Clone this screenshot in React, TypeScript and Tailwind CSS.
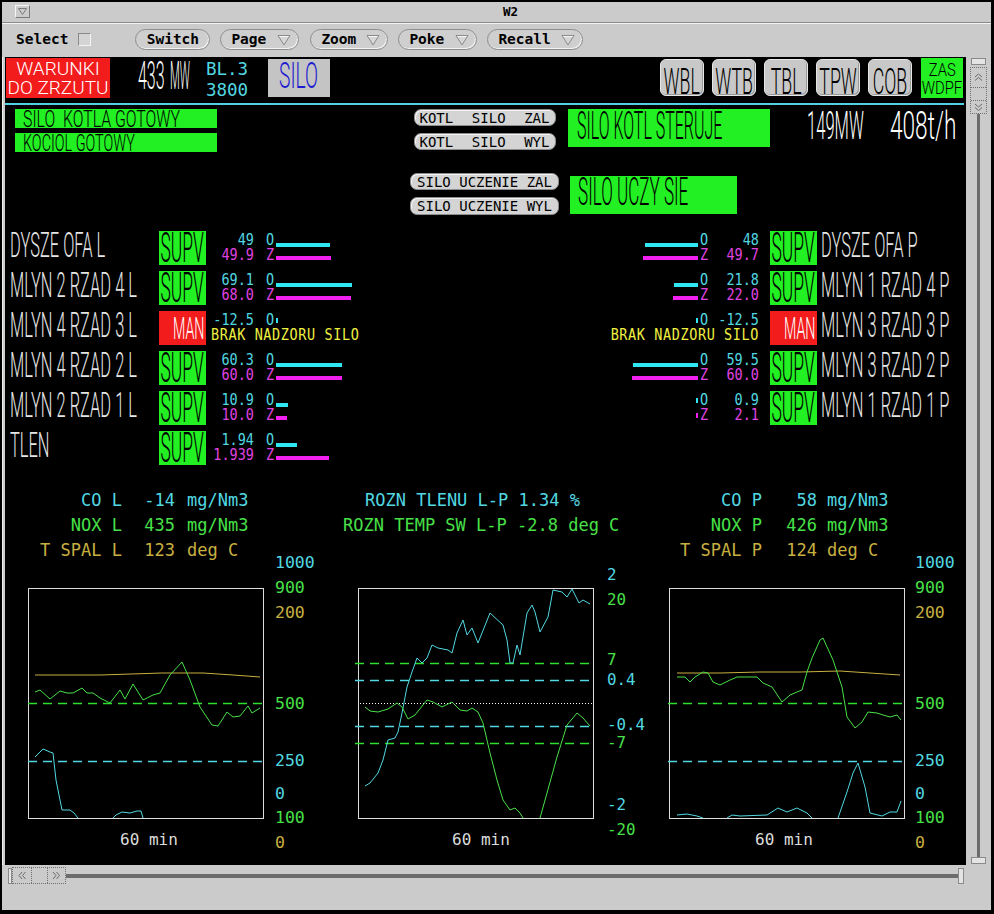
import React from 'react';

type Row = {
  label: string;
  mode: 'SUPV' | 'MAN';
  o: string;
  z?: string;
  ow: number;
  zw: number;
};

const leftRows: Row[] = [
  { label: 'DYSZE OFA L', mode: 'SUPV', o: '49', z: '49.9', ow: 54, zw: 55 },
  { label: 'MLYN 2 RZAD 4 L', mode: 'SUPV', o: '69.1', z: '68.0', ow: 76, zw: 75 },
  { label: 'MLYN 4 RZAD 3 L', mode: 'MAN', o: '-12.5', ow: 0, zw: 0 },
  { label: 'MLYN 4 RZAD 2 L', mode: 'SUPV', o: '60.3', z: '60.0', ow: 66, zw: 66 },
  { label: 'MLYN 2 RZAD 1 L', mode: 'SUPV', o: '10.9', z: '10.0', ow: 12, zw: 11 },
  { label: 'TLEN', mode: 'SUPV', o: '1.94', z: '1.939', ow: 21, zw: 53 },
];

const rightRows: (Row | null)[] = [
  { label: 'DYSZE OFA P', mode: 'SUPV', o: '48', z: '49.7', ow: 53, zw: 55 },
  { label: 'MLYN 1 RZAD 4 P', mode: 'SUPV', o: '21.8', z: '22.0', ow: 24, zw: 25 },
  { label: 'MLYN 3 RZAD 3 P', mode: 'MAN', o: '-12.5', ow: 0, zw: 0 },
  { label: 'MLYN 3 RZAD 2 P', mode: 'SUPV', o: '59.5', z: '60.0', ow: 65, zw: 66 },
  { label: 'MLYN 1 RZAD 1 P', mode: 'SUPV', o: '0.9', z: '2.1', ow: 0, zw: 0 },
  null,
];

const MONO = "font-['DejaVu_Sans_Mono',monospace]";

// tall, narrow vector-style lettering of the mimic
function Cond({ children, className = '' }: { children: React.ReactNode; className?: string }) {
  return (
    <span className={`inline-block whitespace-pre font-['Roboto',sans-serif] font-light leading-none ${className}`}>
      {children}
    </span>
  );
}

function Num({ children, className = '' }: { children: React.ReactNode; className?: string }) {
  return (
    <span
      className={`inline-block self-start whitespace-pre ${MONO} origin-top text-[13.5px] leading-[12.5px] scale-y-[1.2] ${className}`}
    >
      {children}
    </span>
  );
}

function Bar({ w, color, second }: { w: number; color: string; second?: boolean }) {
  if (w <= 2) return <div className={`mb-[4px] h-[5px] w-[2px] self-end ${color}`} />;
  return <div className={`h-[4px] self-end ${second ? 'mb-[2px]' : ''} ${color}`} style={{ width: w }} />;
}

function ModeBox({ mode }: { mode: Row['mode'] }) {
  if (mode === 'MAN')
    return (
      <div className="mt-[1px] flex h-[34px] w-[47px] shrink-0 items-center justify-end bg-[#f21c1c] pr-[2px]">
        <Cond className="origin-right scale-x-[0.46] text-[31px] text-white">MAN</Cond>
      </div>
    );
  return (
    <div className="mt-[1px] flex h-[34px] w-[47px] shrink-0 items-center justify-center bg-[#22f022]">
      <Cond className="scale-x-[0.415] text-[42px] text-black">SUPV</Cond>
    </div>
  );
}

const CYAN_T = 'text-[#52d8e2]';
const MAG_T = 'text-[#e044e0]';
const CYAN_B = 'bg-[#30e6f2]';
const MAG_B = 'bg-[#f020f0]';

function LeftSide({ r }: { r: Row }) {
  return (
    <div className="flex w-[595px] shrink-0 items-start pl-[5px]">
      <div className="-mt-[2px] h-[35px] w-[149px] shrink-0">
        <Cond className="origin-left scale-x-[0.47] text-[35px] text-[#e6e6e6]">{r.label}</Cond>
      </div>
      <ModeBox mode={r.mode} />
      <div className="flex flex-col pt-[2px]">
        <div className="flex h-[15px]">
          <Num className={`w-[48px] text-right ${CYAN_T}`}>{r.o}</Num>
          <Num className={`w-[22px] pl-[12px] ${CYAN_T}`}>O</Num>
          <Bar w={r.ow} color={CYAN_B} />
        </div>
        {r.z !== undefined ? (
          <div className="flex h-[15px]">
            <Num className={`w-[48px] text-right ${MAG_T}`}>{r.z}</Num>
            <Num className={`w-[22px] pl-[12px] ${MAG_T}`}>Z</Num>
            <Bar w={r.zw} color={MAG_B} second />
          </div>
        ) : (
          <div className="flex h-[15px] pl-[5px]">
            <Num className="tracking-[0.6px] text-[#f0f040]">BRAK NADZORU SILO</Num>
          </div>
        )}
      </div>
    </div>
  );
}

function RightSide({ r }: { r: Row }) {
  return (
    <div className="flex items-start">
      <div className="flex w-[159px] shrink-0 flex-col pt-[2px]">
        <div className="flex h-[15px] justify-end">
          <Bar w={r.ow} color={CYAN_B} />
          <Num className={`w-[14px] pl-[2px] ${CYAN_T}`}>O</Num>
          <Num className={`w-[47px] text-right ${CYAN_T}`}>{r.o}</Num>
        </div>
        {r.z !== undefined ? (
          <div className="flex h-[15px] justify-end">
            <Bar w={r.zw} color={MAG_B} second />
            <Num className={`w-[14px] pl-[2px] ${MAG_T}`}>Z</Num>
            <Num className={`w-[47px] text-right ${MAG_T}`}>{r.z}</Num>
          </div>
        ) : (
          <div className="flex h-[15px] justify-end">
            <Num className="tracking-[0.6px] text-[#f0f040]">BRAK NADZORU SILO</Num>
          </div>
        )}
      </div>
      <div className="ml-[11px]">
        <ModeBox mode={r.mode} />
      </div>
      <div className="-mt-[2px] ml-[4px] h-[35px]">
        <Cond className="origin-left scale-x-[0.47] text-[35px] text-[#e6e6e6]">{r.label}</Cond>
      </div>
    </div>
  );
}

function PillBtn({ children, className = '' }: { children: React.ReactNode; className?: string }) {
  return (
    <div
      className={`flex h-[17px] items-center rounded-[7px] border border-[#8c8c8c] bg-[#d4d4d4] ${MONO} text-[14px] leading-none text-black shadow-[inset_1px_1px_0_#f4f4f4] ${className}`}
    >
      {children}
    </div>
  );
}

function HeadBtn({ label }: { label: string }) {
  return (
    <div className="ml-[8px] mt-[2px] flex h-[37px] w-[44px] shrink-0 justify-center rounded-[6px] border border-[#e6e6e6] bg-[#c8c8c8] pt-[3px] shadow-[inset_-1px_-1px_0_#9a9a9a]">
      <Cond className="scale-x-[0.48] text-[37px] text-black">{label}</Cond>
    </div>
  );
}

function Tri() {
  return (
    <svg width="14" height="12" viewBox="0 0 14 12">
      <polygon points="1,1.5 13,1.5 7,11" fill="#d6d6d6" stroke="#8a8a8a" />
      <polyline points="2.5,2.5 11.5,2.5" stroke="#f6f6f6" />
    </svg>
  );
}

function ToolBtn({ label, menu, className = '' }: { label: string; menu?: boolean; className?: string }) {
  return (
    <div
      className={`flex h-[21px] shrink-0 items-center rounded-full border border-[#8e8e8e] bg-[#cfcfcf] shadow-[inset_-1px_-1px_0_#f2f2f2] ${menu ? 'pl-[10px] pr-[7px]' : 'justify-center'} ${className}`}
    >
      <span className={`${MONO} text-[14.5px] font-bold leading-none text-black`}>{label}</span>
      {menu && (
        <span className="ml-auto flex">
          <Tri />
        </span>
      )}
    </div>
  );
}

function HeadLine({
  label,
  value,
  unit,
  color,
  lw,
  vw,
  gap,
}: {
  label: string;
  value: string;
  unit: string;
  color: string;
  lw: string;
  vw: string;
  gap: string;
}) {
  return (
    <div className={`flex h-[25px] ${color}`}>
      <span className={`${lw} text-right`}>{label}</span>
      <span className={`${vw} text-right`}>{value}</span>
      <span className={gap}>{unit}</span>
    </div>
  );
}

const C = '#52d8e2';
const G = '#48e048';
const GD = '#2ee02e';
const Y = '#c8b040';
const W = '#dcdcdc';

function Charts() {
  const lbl = (x: number, y: number, s: string, c: string) => (
    <text key={`${x}-${y}`} x={x} y={y} fill={c}>
      {s}
    </text>
  );
  const sideLabels = (x: number) => [
    lbl(x, 568, '1000', C),
    lbl(x, 593, '900', G),
    lbl(x, 618, '200', Y),
    lbl(x, 709, '500', G),
    lbl(x, 766, '250', C),
    lbl(x, 799, '0', C),
    lbl(x, 823, '100', G),
    lbl(x, 848, '0', Y),
  ];
  const dash = { strokeDasharray: '9 6', strokeWidth: 1.5 };
  return (
    <svg
      width={961}
      height={302}
      viewBox="5 553 961 302"
      className="block"
      fontFamily="DejaVu Sans Mono, monospace"
      fontSize={16.5}
    >
      {/* left */}
      <rect x={28.5} y={588.5} width={235} height={230} fill="none" stroke={W} />
      <line x1={28} x2={264} y1={703.5} y2={703.5} stroke={GD} {...dash} />
      <line x1={28} x2={264} y1={761.5} y2={761.5} stroke={C} {...dash} />
      <polyline fill="none" stroke={Y} points="35,675 100,675 162,673 203,673 233,675 260,677" />
      <polyline
        fill="none"
        stroke={G}
        points="35,692 40,690 50,699 60,691 67,693 73,693 82,688 87,693 93,693 100,698 110,703 120,690 125,699 133,684 143,700 153,695 160,693 170,675 182,662 190,680 200,707 212,725 218,726 227,712 233,717 240,716 248,706 252,713 260,708"
      />
      <polyline fill="none" stroke={C} points="35,757 43,749 50,752 53,753 56,780 62,810 70,810 74,813 78,818" />
      <polyline fill="none" stroke={C} points="113,818 116,815 122,812 130,813 137,811 141,811 143,818" />
      {sideLabels(275)}
      <text x={120} y={845} fill={W} fontSize={16}>
        60 min
      </text>

      {/* middle */}
      <rect x={358.5} y={588.5} width={235} height={230} fill="none" stroke={W} />
      <line x1={355} x2={594} y1={663.5} y2={663.5} stroke={GD} {...dash} />
      <line x1={355} x2={594} y1={680.5} y2={680.5} stroke={C} {...dash} />
      <line x1={360} x2={594} y1={703.5} y2={703.5} stroke="#ffffff" strokeDasharray="1 2" />
      <line x1={355} x2={594} y1={726.5} y2={726.5} stroke={C} {...dash} />
      <line x1={355} x2={594} y1={743.5} y2={743.5} stroke={GD} {...dash} />
      <polyline
        fill="none"
        stroke={C}
        points="365,786 370,783 378,773 383,760 388,740 395,738 398,732 402,713 407,687 412,672 417,658 422,663 427,658 432,645 438,648 448,650 452,653 457,633 463,620 467,635 472,628 478,643 490,613 503,625 507,640 510,663 513,663 517,645 520,655 527,613 532,605 535,612 540,632 548,617 553,590 562,592 567,597 572,589 579,603 583,600 590,604"
      />
      <polyline
        fill="none"
        stroke={G}
        points="365,707 370,711 378,712 388,709 397,703 402,707 408,719 415,715 427,700 433,702 442,707 452,702 460,710 467,711 472,708 478,712 483,723 490,753 497,780 503,800 510,810 515,808 520,813 523,818"
      />
      <polyline fill="none" stroke={G} points="540,818 547,793 557,757 567,725 577,713 583,718 590,726" />
      <g fontSize={15.8}>
        {lbl(607, 580, '2', C)}
        {lbl(607, 605, '20', G)}
        {lbl(607, 665, '7', G)}
        {lbl(607, 685, '0.4', C)}
        {lbl(607, 730, '-0.4', C)}
        {lbl(607, 748, '-7', G)}
        {lbl(607, 810, '-2', C)}
        {lbl(607, 835, '-20', G)}
      </g>
      <text x={452} y={845} fill={W} fontSize={16}>
        60 min
      </text>

      {/* right */}
      <rect x={669.5} y={588.5} width={235} height={230} fill="none" stroke={W} />
      <line x1={668} x2={905} y1={703.5} y2={703.5} stroke={GD} {...dash} />
      <line x1={668} x2={905} y1={761.5} y2={761.5} stroke={C} {...dash} />
      <polyline fill="none" stroke={Y} points="677,673 720,673 760,672 800,672 840,671 870,673 900,675" />
      <polyline
        fill="none"
        stroke={G}
        points="677,677 685,677 690,682 695,677 703,672 708,673 713,682 720,685 730,680 737,677 757,677 763,683 772,687 782,702 790,695 797,692 802,690 807,672 812,658 820,640 823,638 833,660 842,687 847,717 855,728 862,722 868,712 877,713 883,715 890,717 897,715 901,720"
      />
      <polyline fill="none" stroke={C} points="677,815 687,814 697,816 703,818" />
      <polyline
        fill="none"
        stroke={C}
        points="727,818 732,815 740,816 767,815 778,808 787,812 797,808 807,813 812,818"
      />
      <polyline
        fill="none"
        stroke={C}
        points="838,818 847,792 853,773 858,763 865,787 870,813 882,816 890,812 897,812 901,801"
      />
      {sideLabels(915)}
      <text x={755} y={845} fill={W} fontSize={16}>
        60 min
      </text>
    </svg>
  );
}

function Chevrons({ dir }: { dir: 'up' | 'down' | 'left' | 'right' }) {
  const pts =
    dir === 'up'
      ? ['1,4 4.5,1 8,4', '1,7.5 4.5,4.5 8,7.5']
      : dir === 'down'
        ? ['1,1 4.5,4 8,1', '1,4.5 4.5,7.5 8,4.5']
        : dir === 'left'
          ? ['4,1 1,4.5 4,8', '7.5,1 4.5,4.5 7.5,8']
          : ['1,1 4,4.5 1,8', '4.5,1 7.5,4.5 4.5,8'];
  return (
    <svg width="9" height="9" viewBox="0 0 9 9">
      {pts.map((p) => (
        <polyline key={p} points={p} fill="none" stroke="#6a6a6a" />
      ))}
    </svg>
  );
}

function Canvas() {
  return (
    <div className="flex h-[808px] w-[961px] shrink-0 flex-col overflow-hidden bg-black">
      {/* header strip */}
      <div className="flex h-[46px] shrink-0 items-start">
        <div className="ml-[1px] mt-[1px] flex h-[40px] w-[104px] shrink-0 flex-col items-center justify-center bg-[#f21c1c] font-['Roboto',sans-serif] text-[19px] font-light leading-[19px] text-white">
          <span>WARUNKI</span>
          <span>DO ZRZUTU</span>
        </div>
        <div className="ml-[28px] w-[32px] shrink-0">
          <Cond className="origin-left scale-x-[0.41] text-[39px] text-white">433</Cond>
        </div>
        <div className="w-[36px] shrink-0">
          <Cond className="origin-left scale-x-[0.29] text-[39px] text-white">MW</Cond>
        </div>
        <div className={`mt-[2px] w-[62px] shrink-0 ${MONO} text-[17.5px] leading-[21px] text-[#52d8e2]`}>
          <div>BL.3</div>
          <div>3800</div>
        </div>
        <div className="mt-[2px] flex h-[38px] w-[62px] shrink-0 justify-center bg-[#c4c4c4]">
          <Cond className="-mt-[2px] scale-x-[0.52] text-[37px] text-[#1c1cd0]">SILO</Cond>
        </div>
        <div className="w-[322px] shrink-0" />
        <HeadBtn label="WBL" />
        <HeadBtn label="WTB" />
        <HeadBtn label="TBL" />
        <HeadBtn label="TPW" />
        <HeadBtn label="COB" />
        <div className="ml-[9px] mt-[1px] flex h-[40px] w-[42px] shrink-0 flex-col items-center justify-center bg-[#22f022]">
          <div className="flex h-[18px] items-center">
            <Cond className="scale-x-[0.78] text-[19px] text-black">ZAS</Cond>
          </div>
          <div className="flex h-[18px] items-center">
            <Cond className="scale-x-[0.78] text-[19px] text-black">WDPF</Cond>
          </div>
        </div>
      </div>
      <div className="h-[2px] w-[959px] shrink-0 bg-[#50d0e0]" />

      {/* status / commands */}
      <div className="flex h-[125px] shrink-0 items-start">
        <div className="ml-[10px] mt-[4px] flex flex-col gap-[5px]">
          <div className="flex h-[19px] w-[202px] items-center bg-[#22f022] pl-[8px]">
            <Cond className="origin-left scale-x-[0.66] text-[24px] text-black">SILO  KOTLA GOTOWY</Cond>
          </div>
          <div className="flex h-[19px] w-[202px] items-center bg-[#22f022] pl-[8px]">
            <Cond className="origin-left scale-x-[0.6] text-[24px] text-black">KOCIOL GOTOWY</Cond>
          </div>
        </div>
        <div className="ml-[193px] mt-[4px] flex w-[149px] shrink-0 flex-col items-center">
          <PillBtn className="w-[142px] justify-between px-[5px]">
            <span>KOTL</span>
            <span>SILO</span>
            <span>ZAL</span>
          </PillBtn>
          <PillBtn className="mt-[7px] w-[142px] justify-between px-[5px]">
            <span>KOTL</span>
            <span>SILO</span>
            <span>WYL</span>
          </PillBtn>
          <PillBtn className="mt-[23px] w-[149px] justify-center">SILO UCZENIE ZAL</PillBtn>
          <PillBtn className="mt-[7px] h-[18px] w-[149px] justify-center">SILO UCZENIE WYL</PillBtn>
        </div>
        <div className="ml-[9px] mt-[4px] flex flex-col">
          <div className="h-[38px] w-[202px] bg-[#22f022] pl-[9px]">
            <Cond className="-mt-[2px] origin-left scale-x-[0.41] text-[39px] text-black">SILO KOTL STERUJE</Cond>
          </div>
          <div className="ml-[2px] mt-[29px] h-[38px] w-[167px] bg-[#22f022] pl-[8px]">
            <Cond className="-mt-[3px] origin-left scale-x-[0.45] text-[38px] text-black">SILO UCZY SIE</Cond>
          </div>
        </div>
        <div className="ml-[37px] mt-[2px] flex">
          <div className="w-[83px]">
            <Cond className="origin-left scale-x-[0.425] text-[39px] text-white">149MW</Cond>
          </div>
          <div>
            <Cond className="origin-left scale-x-[0.58] text-[39px] text-white">408t/h</Cond>
          </div>
        </div>
      </div>

      {/* mill rows */}
      <div className="flex shrink-0 flex-col">
        {leftRows.map((r, i) => {
          const rr = rightRows[i];
          return (
            <div key={r.label} className="flex h-[40px] items-start">
              <LeftSide r={r} />
              {rr && <RightSide r={rr} />}
            </div>
          );
        })}
      </div>

      {/* flue gas readings */}
      <div className={`mt-[18px] flex h-[65px] shrink-0 whitespace-pre ${MONO} text-[17px] leading-[25px]`}>
        <div className="w-[325px] shrink-0">
          <HeadLine label="CO L" value="-14" unit="mg/Nm3" color="text-[#52d8e2]" lw="w-[117px]" vw="w-[53px]" gap="ml-[12px]" />
          <HeadLine label="NOX L" value="435" unit="mg/Nm3" color="text-[#48e048]" lw="w-[117px]" vw="w-[53px]" gap="ml-[12px]" />
          <HeadLine label="T SPAL L" value="123" unit="deg C" color="text-[#c8b040]" lw="w-[117px]" vw="w-[53px]" gap="ml-[12px]" />
        </div>
        <div className="w-[330px] shrink-0">
          <div className="h-[25px] pl-[35px] text-[#52d8e2]">ROZN TLENU L-P 1.34 %</div>
          <div className="h-[25px] pl-[13px] text-[#48e048]">ROZN TEMP SW L-P -2.8 deg C</div>
        </div>
        <div className="w-[306px] shrink-0">
          <HeadLine label="CO P" value="58" unit="mg/Nm3" color="text-[#52d8e2]" lw="w-[102px]" vw="w-[55px]" gap="ml-[10px]" />
          <HeadLine label="NOX P" value="426" unit="mg/Nm3" color="text-[#48e048]" lw="w-[102px]" vw="w-[55px]" gap="ml-[10px]" />
          <HeadLine label="T SPAL P" value="124" unit="deg C" color="text-[#c8b040]" lw="w-[102px]" vw="w-[55px]" gap="ml-[10px]" />
        </div>
      </div>
      <Charts />
    </div>
  );
}

export default function App() {
  return (
    <div className="h-[914px] w-[994px] overflow-hidden bg-black pl-[2px] pt-[2px]">
      <div className="flex h-[908px] w-[989px] flex-col bg-[#cbcbcb]">
        {/* title bar */}
        <div className="flex h-[20px] shrink-0 items-start">
          <div className="ml-[13px] mt-[3px] flex h-[13px] w-[15px] items-center justify-center border border-b-[#7c7c7c] border-l-[#f6f6f6] border-r-[#7c7c7c] border-t-[#f6f6f6]">
            <svg width="9" height="7" viewBox="0 0 9 7">
              <polygon points="0.5,0.5 8.5,0.5 4.5,6.5" fill="none" stroke="#7c7c7c" />
            </svg>
          </div>
          <div className={`flex-1 text-center ${MONO} text-[12.5px] font-bold leading-[20px] text-black`}>W2</div>
        </div>
        <div className="h-[2px] shrink-0 border-t border-[#8a8a8a] bg-[#f4f4f4]" />

        {/* toolbar */}
        <div className="flex h-[33px] shrink-0 items-start pl-[14px] pt-[5px]">
          <div className="flex h-[21px] items-center">
            <span className={`${MONO} text-[14.5px] font-bold leading-none text-black`}>Select</span>
            <div className="ml-[10px] h-[13px] w-[13px] border border-b-[#f4f4f4] border-l-[#8a8a8a] border-r-[#f4f4f4] border-t-[#8a8a8a] bg-[#d4d4d4]" />
          </div>
          <ToolBtn label="Switch" className="ml-[44px] w-[75px]" />
          <ToolBtn label="Page" menu className="ml-[10px] w-[79px]" />
          <ToolBtn label="Zoom" menu className="ml-[11px] w-[78px]" />
          <ToolBtn label="Poke" menu className="ml-[10px] w-[79px]" />
          <ToolBtn label="Recall" menu className="ml-[10px] w-[96px]" />
        </div>

        {/* work area */}
        <div className="flex h-[808px] shrink-0">
          <div className="w-[3px] shrink-0 border-l border-[#f0f0f0]" />
          <Canvas />
          <div className="flex w-[25px] shrink-0 flex-col items-center pr-[1px]">
            <div className="mt-[1px] h-[7px] w-[15px] border border-[#8a8a8a] bg-[#e4e4e4]" />
            <div className="mt-[2px] flex h-[47px] w-[17px] flex-col border border-dotted border-[#707070]">
              <div className="flex h-[19px] items-center justify-center">
                <Chevrons dir="up" />
              </div>
              <div className="h-[13px] border-t border-dotted border-[#707070]" />
              <div className="flex flex-1 items-center justify-center border-t border-dotted border-[#707070]">
                <Chevrons dir="down" />
              </div>
            </div>
            <div className="w-[3px] flex-1 bg-[#6c6c6c]" />
            <div className="mb-[1px] h-[7px] w-[15px] border border-[#8a8a8a] bg-[#e4e4e4]" />
          </div>
        </div>

        {/* horizontal scrollbar */}
        <div className="flex h-[21px] shrink-0 items-center pl-[6px] pr-[27px]">
          <div className="h-[16px] w-[4px] border border-[#8a8a8a] bg-[#e4e4e4]" />
          <div className="flex h-[17px] w-[54px] border border-dotted border-[#707070]">
            <div className="flex w-[18px] items-center justify-center">
              <Chevrons dir="left" />
            </div>
            <div className="flex-1 border-l border-dotted border-[#707070]" />
            <div className="flex w-[18px] items-center justify-center border-l border-dotted border-[#707070]">
              <Chevrons dir="right" />
            </div>
          </div>
          <div className="h-[4px] flex-1 bg-[#6c6c6c]" />
          <div className="h-[16px] w-[6px] border border-[#8a8a8a] bg-[#e4e4e4]" />
        </div>
        <div className="flex-1" />
      </div>
    </div>
  );
}
